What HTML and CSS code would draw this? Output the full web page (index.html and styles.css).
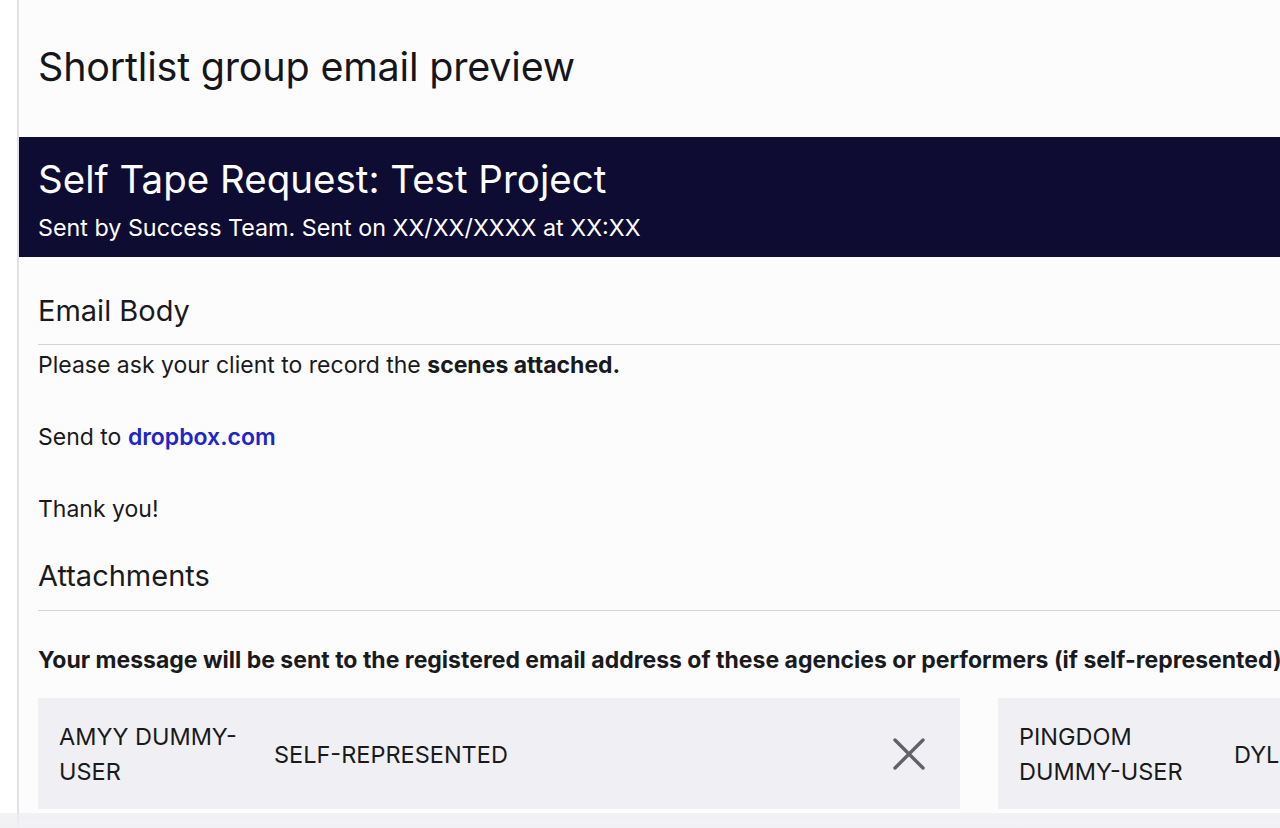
FILE: index.html
```html
<!DOCTYPE html>
<html lang="en">
<head>
<meta charset="utf-8">
<title>Shortlist group email preview</title>
<link rel="stylesheet" href="styles.css">
</head>
<body>
<div class="page">
  <header class="page-header">
    <h1 class="page-title">Shortlist group email preview</h1>
  </header>
  <section class="banner">
    <h2 class="banner-title">Self Tape Request: Test Project</h2>
    <p class="banner-sub">Sent by Success Team. Sent on XX/XX/XXXX at XX:XX</p>
  </section>
  <main class="content">
    <h3 class="section-title">Email Body</h3>
    <div class="email-body">
      <p>Please ask your client to record the <strong>scenes attached.</strong></p>
      <p>&nbsp;</p>
      <p>Send to <a class="link" href="#">dropbox.com</a></p>
      <p>&nbsp;</p>
      <p>Thank you!</p>
    </div>
    <h3 class="section-title attach-title">Attachments</h3>
    <p class="notice">Your message will be sent to the registered email address of these agencies or performers (if self-represented)</p>
    <div class="cards">
      <div class="card">
        <div class="card-name">AMYY DUMMY-USER</div>
        <div class="card-agency">SELF-REPRESENTED</div>
        <button class="card-remove" aria-label="Remove">
          <svg viewBox="0 0 32 32" width="32" height="32"><path d="M2 2 L30 30 M30 2 L2 30" stroke="#616167" stroke-width="3.4" stroke-linecap="round" fill="none"/></svg>
        </button>
      </div>
      <div class="card">
        <div class="card-name">PINGDOM <span class="nw">DUMMY-USER</span></div>
        <div class="card-agency">DYLAN AGENCY</div>
        <button class="card-remove" aria-label="Remove">
          <svg viewBox="0 0 32 32" width="32" height="32"><path d="M2 2 L30 30 M30 2 L2 30" stroke="#616167" stroke-width="3.4" stroke-linecap="round" fill="none"/></svg>
        </button>
      </div>
    </div>
  </main>
</div>
<div class="bottom-shade"></div>
</body>
</html>
```
FILE: styles.css
```css
* { box-sizing: border-box; }
html, body { margin: 0; padding: 0; }
body {
  background: #ffffff;
  font-family: Inter, "Noto Sans", "Liberation Sans", sans-serif;
  color: #1a1a1d;
  overflow: hidden;
  height: 828px;
}
.page {
  margin-left: 17px;
  border-left: 2px solid #e2e2e6;
  background: #fcfcfd;
  width: 2000px;
  min-height: 828px;
}
.page-header {
  height: 137px;
  padding: 45px 0 0 19px;
}
.page-title {
  margin: 0;
  font-size: 39.5px;
  line-height: 44px;
  font-weight: 400;
  letter-spacing: -0.2px;
  color: #16161a;
}
.banner {
  background: #0e0c33;
  color: #ffffff;
  height: 120px;
  padding: 21px 0 0 19px;
}
.banner-title {
  margin: 0;
  font-size: 38.5px;
  line-height: 42px;
  font-weight: 400;
}
.banner-sub {
  margin: 13px 0 0;
  font-size: 23.3px;
  line-height: 30px;
}
.content {
  padding: 0 0 0 19px;
}
.section-title {
  margin: 37px 0 0;
  padding-bottom: 16px;
  border-bottom: 1px solid #d4d4d8;
  font-size: 29px;
  line-height: 34px;
  font-weight: 400;
  color: #1a1a1d;
  width: 1300px;
}
.attach-title { margin-top: 32px; padding-bottom: 17px; }
.email-body { margin-top: 2px; }
.email-body p {
  margin: 0;
  font-size: 23px;
  line-height: 36px;
}
.email-body strong { font-weight: 700; }
.link {
  color: #1f25c9;
  font-weight: 600;
  text-decoration: none;
}
.notice {
  margin: 34px 0 0;
  font-size: 23px;
  line-height: 30px;
  font-weight: 700;
  white-space: nowrap;
}
.cards {
  display: flex;
  gap: 38px;
  margin-top: 23px;
}
.card {
  flex: 0 0 922px;
  display: grid;
  grid-template-columns: 195px 1fr auto;
  column-gap: 20px;
  align-items: center;
  background: #f0f0f4;
  padding: 21px 35px 20px 21px;
  min-height: 111px;
}
.card-name, .card-agency {
  font-size: 23.5px;
  line-height: 35px;
  color: #1a1a1d;
}
.nw { white-space: nowrap; }
.card-remove {
  border: 0;
  background: none;
  padding: 0;
  width: 32px;
  height: 32px;
  display: flex;
}
.bottom-shade {
  position: fixed;
  left: 0;
  right: 0;
  bottom: 0;
  height: 15px;
  background: linear-gradient(to bottom, rgba(235,235,240,0.6), rgba(240,240,243,0.95));
}
```
